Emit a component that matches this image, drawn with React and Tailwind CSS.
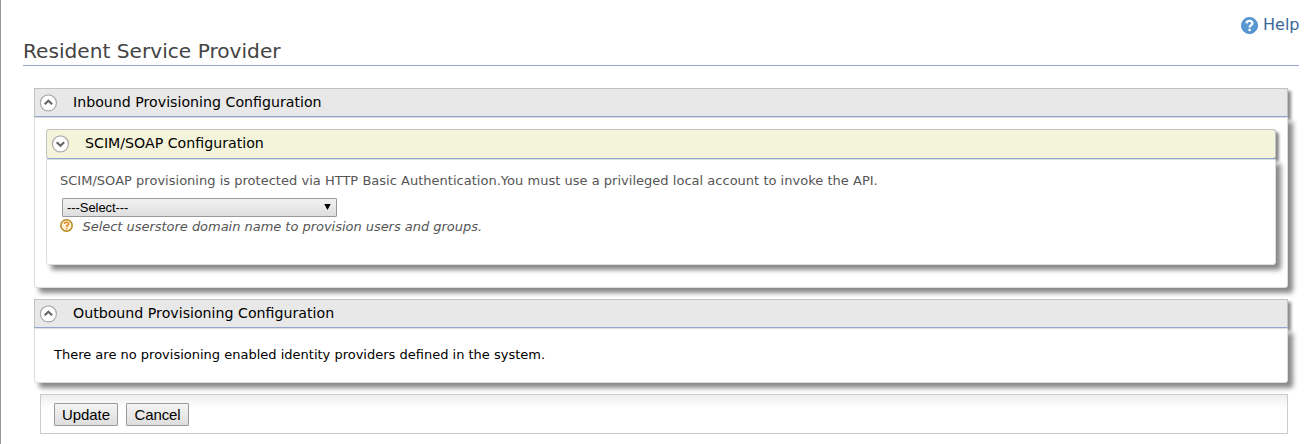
import React from "react";

function Toggle({ down }) {
  return (
    <svg className="h-[18px] w-[18px] shrink-0" viewBox="0 0 18 18">
      <circle cx="9.4" cy="8.9" r="8" fill="#fff" stroke="#aaa" strokeWidth="1.2" />
      <path d={down ? "M5.7 7.2 9.4 10.7l3.7-3.5" : "M5.7 10.3 9.4 6.8l3.7 3.5"} fill="none" stroke="#666" strokeWidth="2.2" />
    </svg>
  );
}

export default function App() {
  return (
    <div className="h-[444px] overflow-hidden border-l border-[#999] bg-white pr-[11px] pl-[22px] font-['DejaVu_Sans',sans-serif] text-[13px] text-black">
      <div className="flex h-[38px] items-start justify-end gap-[5px] pt-[15px] text-[#386698]">
        <svg className="mt-[2px] h-[17px] w-[17px]" viewBox="0 0 17 17">
          <circle cx="8.5" cy="8.5" r="8" fill="#5a98d3" stroke="#4a8acb" />
          <path d="M5.6 6.4C5.8 3.2 11.4 3.2 11.4 6.2 11.4 8.2 8.6 8 8.6 10.6" fill="none" stroke="#fff" strokeWidth="2.3" />
          <rect x="7.4" y="11.8" width="2.4" height="2.3" fill="#fff" />
        </svg>
        <span className="-mr-[0.5px] ml-[0.5px] text-[16px] leading-[19px]">Help</span>
      </div>
      <h2 className="h-[28px] border-b border-[#94a6cb] text-[20.15px] leading-[26px] text-[#444]">Resident Service Provider</h2>

      <main className="mt-[22px] pr-[11px] pl-[11px]">
        <section>
          <h3 className="flex h-[29px] items-center gap-4 border border-[#c2c2c2] border-b-[#8da6d0] bg-[#e8e8e8] pl-[4px] text-[14.18px] leading-[18px] shadow-[3px_3px_3px_#888]">
            <Toggle />
            <span className="-mt-px">Inbound Provisioning Configuration</span>
          </h3>
          <div className="relative h-[171px] rounded-b-[3px] border border-[#ddd] bg-white px-[11px] pt-[11px] shadow-[5px_5px_5px_#888]">
            <h3 className="flex h-[30px] items-center gap-4 rounded-[3px] border border-[#c2c2c2] border-b-[#8da6d0] bg-[#f4f4da] pl-[4px] text-[14.18px] leading-[18px] shadow-[3px_3px_3px_#888]">
              <Toggle down />
              <span className="-mt-[2px]">SCIM/SOAP Configuration</span>
            </h3>
            <div className="relative h-[106px] rounded-b-[3px] border border-[#ddd] bg-white pt-[12px] pl-[13px] text-[#555] shadow-[5px_5px_5px_#888]">
              <p className="h-[26px] text-[13px] leading-[18px] tracking-[0.018px]">SCIM/SOAP provisioning is protected via HTTP Basic Authentication.You must use a privileged local account to invoke the API.</p>
              <div className="ml-[2px] flex h-[19px] w-[275px] items-center justify-between rounded-[1px] border border-[#999] bg-linear-to-b from-[#f2f2f2] to-[#dedede] pr-[5px] pl-1 font-['Liberation_Sans',sans-serif] text-[13px] tracking-[-0.06px] text-black">
                <span>---Select---</span>
                <svg className="-mt-[2px] h-[6px] w-[7px]" viewBox="0 0 7 6"><path d="M.3 0h6.4L3.5 6z" /></svg>
              </div>
              <div className="flex gap-[9px] leading-[18px]">
                <svg className="mt-[2px] h-[13px] w-[13px]" viewBox="0 0 13 13">
                  <circle cx="6.5" cy="6.5" r="5.7" fill="#fff5d6" stroke="#b8861c" strokeWidth="1.5" />
                  <path d="M4.4 5C4.5 2.7 8.7 2.7 8.6 5 8.5 6.3 6.6 6.3 6.6 8" fill="none" stroke="#e78a2c" strokeWidth="1.6" />
                  <rect x="5.8" y="8.8" width="1.6" height="1.5" fill="#e78a2c" />
                </svg>
                <span className="pt-px pl-[0.5px] tracking-[-0.03px] italic">Select userstore domain name to provision users and groups.</span>
              </div>
            </div>
          </div>
        </section>

        <section className="relative mt-[11px]">
          <h3 className="flex h-[29px] items-center gap-4 border border-[#c2c2c2] border-b-[#94a6cb] bg-[#e8e8e8] pl-[4px] text-[14.18px] leading-[18px] shadow-[3px_3px_3px_#888]">
            <Toggle />
            <span className="-mt-px">Outbound Provisioning Configuration</span>
          </h3>
          <div className="relative h-[55px] rounded-b-[3px] border border-[#ddd] bg-white pt-[17px] pl-[19px] leading-[18px] shadow-[5px_5px_5px_#888]">
            There are no provisioning enabled identity providers defined in the system.
          </div>
        </section>

        <div className="relative mt-[11px] ml-[6px] flex h-[40px] gap-2 border border-[#ccc] bg-linear-to-b from-[#eee] to-white to-35% pt-[8px] pl-[13px] font-['Liberation_Sans',sans-serif] text-[15px] tracking-[-0.1px]">
          <button className="h-[23px] w-[64px] rounded-[1px] border border-[#999] bg-linear-to-b from-[#f4f4f4] to-[#dedede] leading-[21px]">Update</button>
          <button className="h-[23px] w-[63px] rounded-[1px] border border-[#999] bg-linear-to-b from-[#f4f4f4] to-[#dedede] leading-[21px]">Cancel</button>
        </div>
      </main>
    </div>
  );
}
